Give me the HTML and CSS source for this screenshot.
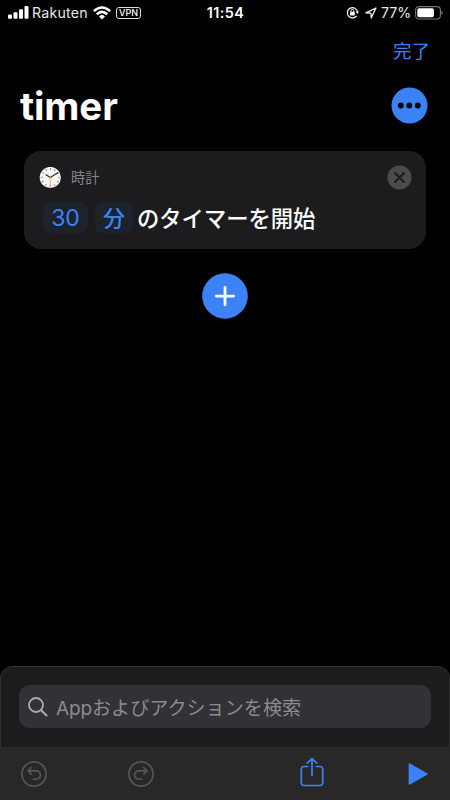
FILE: index.html
```html
<!DOCTYPE html>
<html lang="ja">
<head>
<meta charset="utf-8">
<title>timer</title>
<link rel="stylesheet" href="styles.css">
</head>
<body>
<div class="screen">
  <header class="status">
    <div class="status-left">
      <svg class="signal" width="21" height="13" viewBox="0 0 21 13" fill="#fff"><rect x="0" y="8.5" width="4" height="4.2" rx="1"/><rect x="5.5" y="6.3" width="4" height="6.4" rx="1"/><rect x="11" y="3.2" width="4" height="9.5" rx="1"/><rect x="16.5" y="0" width="4" height="12.7" rx="1"/></svg>
      <span class="carrier">Rakuten</span>
      <svg class="wifi" width="18" height="14" viewBox="0 0 18 14" fill="none" stroke="#fff" stroke-width="2.6"><path d="M.9 5.1Q9-2.1 17.1 5.1M3.8 8.2Q9 3.5 14.2 8.2"/><path d="M6 10.4Q9 7.7 12 10.4L9 13.4Z" fill="#fff" stroke="none"/></svg>
      <span class="vpn">VPN</span>
    </div>
    <time class="clock">11:54</time>
    <div class="status-right">
      <svg width="13" height="13" viewBox="0 0 13 13" fill="none" stroke="#fff" stroke-width="1.2"><path d="M10.6 9.8A5.1 5.1 0 1 1 11.5 5.8"/><path d="M9.6 5.6H13L11.4 8.1Z" fill="#fff" stroke="none"/><rect x="4" y="5.8" width="4.8" height="3.6" rx=".6" fill="#fff" stroke="none"/><path d="M5 6V4.8a1.4 1.4 0 0 1 2.8 0V6" stroke-width=".9"/></svg>
      <svg class="location" width="12" height="12" viewBox="0 0 12 12" fill="none" stroke="#fff" stroke-width="1.2" stroke-linejoin="round"><path d="M.9 5.9 11 1 6.2 11 5.9 6.1Z"/></svg>
      <span class="percent">77%</span>
      <svg class="battery" width="28" height="14" viewBox="0 0 28 14"><rect x=".6" y=".6" width="24.8" height="12.4" rx="3.4" fill="none" stroke="#777" stroke-width="1.1"/><rect x="2.3" y="2.3" width="16.6" height="9" rx="1.8" fill="#fff"/><path d="M26.4 4.7q1.4.6 1.4 2.1t-1.4 2.1Z" fill="#777"/></svg>
    </div>
  </header>

  <nav class="nav"><span class="done">完了</span></nav>
  <div class="heading">
    <h1 class="title">timer</h1>
    <svg width="37" height="37" viewBox="0 0 37 37"><circle cx="18.5" cy="18.5" r="18" fill="#3b82f7"/><g fill="#000"><circle cx="9.8" cy="18.5" r="2.9"/><circle cx="18.3" cy="18.5" r="2.9"/><circle cx="26.8" cy="18.5" r="2.9"/></g></svg>
  </div>

  <main class="main">
    <section class="card">
      <div class="card-head">
        <svg width="22" height="22" viewBox="0 0 22 22"><circle cx="11.3" cy="10.5" r="10.6" fill="#f5f5f3"/><circle cx="11.3" cy="10.5" r="8.6" fill="none" stroke="#777" stroke-width="1.7" stroke-dasharray="1 3.503" stroke-dashoffset=".5"/><path d="M7.1 7.8l4.2 2.7 7.4-4.7" fill="none" stroke="#333" stroke-width="1.3" stroke-linecap="round" stroke-linejoin="round"/><path d="M11.3 9.5v10" stroke="#e9b35c" stroke-width=".9"/><circle cx="11.3" cy="10.5" r=".8" fill="#c99445"/></svg>
        <span class="app-name">時計</span>
        <svg class="close" width="25" height="25" viewBox="0 0 25 25"><circle cx="12.5" cy="12.5" r="12.1" fill="#4b4b4c"/><path d="m8 8 9 9M17 8l-9 9" stroke="#1c1c1e" stroke-width="2.1" stroke-linecap="round"/></svg>
      </div>
      <div class="action">
        <span class="token number">30</span>
        <span class="token unit">分</span>
        <span class="action-text">のタイマーを開始</span>
      </div>
    </section>
    <svg class="add" width="46" height="46" viewBox="0 0 46 46"><circle cx="23" cy="23" r="22.8" fill="#3b82f7"/><path d="M23 14.4v17.4M14.3 23.1h17.4" stroke="#fff" stroke-width="2.8" stroke-linecap="round"/></svg>
  </main>

  <section class="sheet">
    <div class="search">
      <svg width="20" height="20" viewBox="0 0 20 20" fill="none" stroke="#aaa9af" stroke-width="1.8" stroke-linecap="round"><circle cx="8" cy="8" r="7"/><path d="m13.2 13.2 5.3 5.3" stroke-width="2.1"/></svg>
      <span class="placeholder"><span class="latin">App</span><span>およびアクションを検索</span></span>
    </div>
  </section>
  <footer class="toolbar">
    <svg width="26" height="26" viewBox="0 0 26 26" fill="none" stroke="#565656" stroke-width="1.7" stroke-linecap="round" stroke-linejoin="round"><circle cx="13" cy="13" r="12.1"/><path d="M10.3 6.5 7 9.8l3.3 3.3M7.3 9.8h7.9a4.2 4.2 0 0 1 0 8.4h-2.7"/></svg>
    <svg class="redo" width="26" height="26" viewBox="0 0 26 26" fill="none" stroke="#565656" stroke-width="1.7" stroke-linecap="round" stroke-linejoin="round"><circle cx="13" cy="13" r="12.1"/><path d="M15.7 6.5 19 9.8l-3.3 3.3M18.7 9.8h-7.9a4.2 4.2 0 0 0 0 8.4h2.7"/></svg>
    <svg class="share" width="24" height="30" viewBox="0 0 24 30" fill="none" stroke="#3b82f7" stroke-width="1.7" stroke-linecap="round" stroke-linejoin="round"><path d="M7.5 9.5H3.8A2.5 2.5 0 0 0 1.3 12v14a2.5 2.5 0 0 0 2.5 2.5h16.4a2.5 2.5 0 0 0 2.5-2.5V12a2.5 2.5 0 0 0-2.5-2.5h-3.7M12 18.4V1.6M7.3 6.2 12 1.5l4.7 4.7"/></svg>
    <svg class="play" width="20" height="22" viewBox="0 0 20 22"><path d="M1.5 1.2v19.6L18.7 11Z" fill="#3b82f7" stroke="#3b82f7" stroke-width="1.8" stroke-linejoin="round"/></svg>
  </footer>
</div>
</body>
</html>
```

FILE: styles.css
```css
* { box-sizing: border-box; }
body { margin: 0; background: #000; }
svg { display: block; flex: none; }

.screen {
  width: 450px;
  height: 800px;
  display: flex;
  flex-direction: column;
  background: #000;
  color: #fff;
  font-family: Inter, "Noto Sans CJK JP", sans-serif;
  white-space: nowrap;
  overflow: hidden;
}

.status {
  height: 25px;
  display: grid;
  grid-template-columns: 1fr auto 1fr;
  align-items: center;
  padding: 0 7px 0 8px;
  line-height: 24px;
}
.status-left, .status-right { display: flex; align-items: center; }
.status-right { justify-content: flex-end; }
.carrier { width: 56px; margin-left: 3px; font-size: 14.2px; color: #e6e6e6; letter-spacing: .2px; }
.wifi { margin-left: 5px; }
.vpn {
  width: 25px;
  height: 12px;
  margin-left: 5px;
  border: 1px solid #ddd;
  border-radius: 3px;
  font-size: 9px;
  font-weight: 500;
  line-height: 10px;
  text-align: center;
}
.clock { font-size: 14.4px; font-weight: 600; letter-spacing: .45px; }
.location { margin-left: 6px; }
.percent { margin-left: 4px; width: 30px; font-size: 14.2px; color: #e6e6e6; letter-spacing: -.1px; }
.battery { margin-left: 4px; }

.nav {
  height: 51px;
  display: flex;
  justify-content: flex-end;
  align-items: center;
  padding-right: 20px;
}
.done { font-size: 18.5px; line-height: 28px; font-weight: 400; color: #3b82f7; }

.heading {
  height: 59px;
  display: flex;
  align-items: center;
  justify-content: space-between;
  padding: 0 22px 0 20px;
}
.title { margin: 0; font-size: 38.5px; line-height: 48px; font-weight: 700; letter-spacing: -.1px; }

.main {
  flex: 1;
  padding: 16px 24px 0;
  display: flex;
  flex-direction: column;
  align-items: center;
}
.card {
  width: 402px;
  height: 98px;
  padding: 14px 14px 0 15px;
  border-radius: 17px;
  background: #1c1c1e;
}
.card-head { height: 25px; display: flex; align-items: center; }
.app-name { margin-left: 10px; font-size: 14.3px; line-height: 22px; color: #858587; }
.close { margin-left: auto; }
.action { height: 31px; margin: 12px 0 0 4px; display: flex; align-items: center; }
.token {
  height: 31px;
  border-radius: 8px;
  background: #1c232d;
  color: #3b82f7;
  font-size: 23px;
  line-height: 33px;
  text-align: center;
}
.number { width: 45px; }
.unit { width: 38px; margin-left: 7px; font-size: 22px; font-weight: 500; line-height: 32px; }
.action-text { margin-left: 4px; padding-top: 2px; font-size: 22.3px; line-height: 30px; font-weight: 500; }
.add { margin-top: 24px; }

.sheet {
  height: 81px;
  padding: 18px 18px 0;
  border: 1px solid #303032;
  border-bottom: 0;
  border-radius: 13px 13px 0 0;
  background: #1c1c1e;
}
.search {
  height: 43px;
  display: flex;
  align-items: center;
  padding-left: 9px;
  border-radius: 11px;
  background: #323136;
}
.placeholder { margin-left: 8px; padding-top: 2px; display: flex; align-items: baseline; color: #8b8a91; font-size: 19.1px; line-height: 30px; }
.latin { width: 36px; letter-spacing: -.2px; }

.toolbar {
  height: 53px;
  padding: 0 22px 0 21px;
  display: flex;
  align-items: center;
  background: #282828;
}
.redo { margin-left: 81px; }
.share { margin: -3px 0 0 146px; }
.play { margin-left: auto; }
```
